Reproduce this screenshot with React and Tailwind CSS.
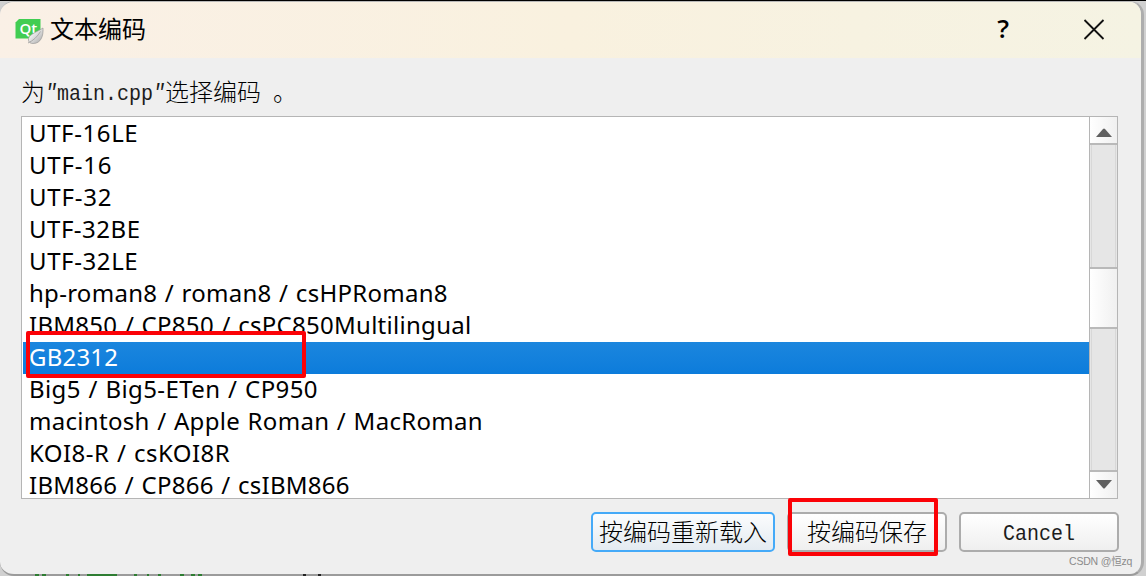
import { useState } from "react";

const encodings = [
  { name: "UTF-16LE", spacing: "tracking-[0.6px]" },
  { name: "UTF-16", spacing: "tracking-[0.8px]" },
  { name: "UTF-32", spacing: "tracking-[0.8px]" },
  { name: "UTF-32BE", spacing: "tracking-[0.5px]" },
  { name: "UTF-32LE", spacing: "tracking-[0.6px]" },
  { name: "hp-roman8 / roman8 / csHPRoman8", spacing: "tracking-[0.28px] [word-spacing:1px]" },
  { name: "IBM850 / CP850 / csPC850Multilingual", spacing: "tracking-[0.28px] [word-spacing:1px]" },
  { name: "GB2312", spacing: "tracking-[0.2px]" },
  { name: "Big5 / Big5-ETen / CP950", spacing: "tracking-[0.4px] [word-spacing:1px]" },
  { name: "macintosh / Apple Roman / MacRoman", spacing: "tracking-[0.3px] [word-spacing:1px]" },
  { name: "KOI8-R / csKOI8R", spacing: "tracking-[0.45px] [word-spacing:1px]" },
  { name: "IBM866 / CP866 / csIBM866", spacing: "tracking-[0.27px] [word-spacing:1px]" },
];

const QtIcon = () => (
  <svg width="30" height="28" viewBox="0 0 30 28" className="mt-[4px]">
    <defs>
      <linearGradient id="leaf" x1="0" y1="0" x2="1" y2="1">
        <stop offset="0.3" stopColor="#f2f2f2" />
        <stop offset="1" stopColor="#a5a5a5" />
      </linearGradient>
    </defs>
    <path d="M5 1H26.500V16L22.500 20.500H1.500V4.500Z" fill="#41cd52" />
    <text
      x="5.5"
      y="15.5"
      fontSize="15"
      fontWeight="600"
      fill="#fff"
      fontFamily="Open Sans, sans-serif"
    >
      Qt
    </text>
    <path
      d="M29 10C29.500 18 27 25.500 19 25.500C16.500 25.500 15 24.500 14.500 22.500C13.500 17 21 15 29 10Z"
      fill="url(#leaf)"
      stroke="#999"
      strokeWidth="0.7"
    />
    <path d="M14 25C19.500 22.500 23.500 18.500 26.500 13.500" stroke="#aaa" fill="none" />
  </svg>
);

const TitleBar = () => (
  <div className="flex h-14 shrink-0 items-center bg-linear-to-r from-[#faf0e6] via-[#f9f1df] to-[#f5f3e3] pl-[14px] pr-[35px]">
    <QtIcon />
    <h1 className="mb-[5px] ml-[6px] text-[24px] leading-none text-black">文本编码</h1>
    <button className="mr-[73px] mb-[4px] ml-auto font-['Open_Sans',sans-serif] text-[26px] font-semibold leading-none text-black">
      ?
    </button>
    <button className="mb-px">
      <svg width="24" height="24" viewBox="0 0 24 24" stroke="#111" strokeWidth="1.8">
        <path d="M2.500 2L21.500 21M21.500 2L2.500 21" />
      </svg>
    </button>
  </div>
);

const Arrow = ({ down }) => (
  <div
    className={`flex h-[26px] shrink-0 items-center justify-center bg-linear-to-r from-white to-[#f0f0f0] ${
      down ? "pb-[2px]" : "pt-[5px]"
    }`}
  >
    <svg width="16" height="10" viewBox="0 0 16 10" fill="#606060">
      <path d={down ? "M0 1H16L9 9Q8 10 7 9Z" : "M0 9H16L9 1Q8 0 7 1Z"} />
    </svg>
  </div>
);

const ScrollBar = () => (
  <div className="flex w-7 shrink-0 flex-col border-l border-[#b5b5b5]">
    <Arrow />
    <div className="h-[126px] shrink-0 border-y-2 border-[#b9b9b9] bg-[#e6e6e6] px-px">
      <div className="h-full border-x border-[#d8d8d8]" />
    </div>
    <div className="h-[58px] shrink-0 bg-linear-to-r from-white to-[#f0f0f0]" />
    <div className="flex-1 border-y-2 border-[#b9b9b9] bg-[#e6e6e6] px-px">
      <div className="h-full border-x border-[#d8d8d8]" />
    </div>
    <Arrow down />
  </div>
);

const mono = "inline-block scale-y-[1.12] font-['Liberation_Mono',monospace] text-[20px] text-[#1c1c1c]";

const buttonBase =
  "flex h-10 items-center justify-center rounded-[5px] border-2 bg-linear-to-b pb-[2px] text-[24px] leading-none font-light text-black";

const App = () => {
  const [selected, setSelected] = useState("GB2312");

  return (
    <div className="relative h-[576px] w-[1146px] overflow-hidden border-t border-black bg-[#d0d0d0] font-['Noto_Sans_CJK_SC',sans-serif]">
      <div className="flex h-[575px] w-[1144px] flex-col overflow-hidden rounded-[14px] border-t border-r-[3px] border-b-2 border-t-[#b8b8b8] border-r-[#adadad] border-b-[#9b9b9b] bg-[#efefef]">
        <TitleBar />

        <div className="flex flex-1 flex-col pr-[23px] pl-[21px]">
          <p className="flex h-[58px] shrink-0 items-center pt-[7px] text-[24px] leading-none font-light whitespace-pre text-black">
            <span>为</span>
            <span className={`${mono} w-3 pt-[5px] italic`}>"</span>
            <span className={`${mono} pt-[6px]`}>main.cpp</span>
            <span className={`${mono} w-3 pt-[5px] italic`}>"</span>
            <span>选择编码</span>
            <span className="ml-3">。</span>
          </p>

          <div className="flex h-[383px] w-[1097px] shrink-0 overflow-hidden border border-[#b5b5b5] bg-white">
            <ul className="flex-1 pt-px pl-px font-['Noto_Sans',sans-serif] text-[24px] leading-[30px]">
              {encodings.map(({ name, spacing }) => (
                <li
                  key={name}
                  onClick={() => setSelected(name)}
                  className={`h-8 pl-[6px] whitespace-nowrap ${spacing} ${
                    name === selected
                      ? "bg-linear-to-b from-[#1b86de] to-[#0c7cdb] text-white"
                      : "text-black"
                  }`}
                >
                  {name}
                </li>
              ))}
            </ul>
            <ScrollBar />
          </div>

          <div className="-mr-px mt-[13px] flex justify-end gap-3">
            <button className={`${buttonBase} w-[184px] border-[#45aaf8] from-[#fbfcfd] to-[#e4ebf1]`}>
              按编码重新载入
            </button>
            <button className={`${buttonBase} w-[160px] border-[#acacac] from-white to-[#efefef]`}>
              按编码保存
            </button>
            <button className={`${buttonBase} w-[160px] border-[#acacac] from-white to-[#efefef]`}>
              <span className={`${mono} pt-[6px]`}>Cancel</span>
            </button>
          </div>
        </div>
      </div>

      {/* tips of the editor text behind the dialog */}
      <svg className="absolute bottom-0 left-0" width="330" height="2">
        <path
          d="M35 1h4M42 1h4M66 1h3M78 1h2M87 1h30M134 1h3M147 1h2M158 1h3M180 1h4M191 1h4M198 1h4"
          stroke="#2e7d32"
          strokeWidth="2"
        />
        <path d="M303 1h3M318 1h3" stroke="#222" strokeWidth="2" />
      </svg>

      {/* highlight frames and watermark over the dialog */}
      <div className="absolute top-[330px] left-[26px] h-[47px] w-[280px] rounded-[2px] border-4 border-[#fb0207]" />
      <div className="absolute top-[497px] left-[788px] h-[58px] w-[150px] rounded-[2px] border-4 border-[#fb0207]" />
      <span className="absolute top-[552px] left-[1069px] font-['Liberation_Sans','Noto_Sans_CJK_SC',sans-serif] text-[10.5px] leading-4 tracking-[-0.2px] whitespace-nowrap text-[#8b8b8b]">
        CSDN @恒zq
      </span>
    </div>
  );
};

export default App;
